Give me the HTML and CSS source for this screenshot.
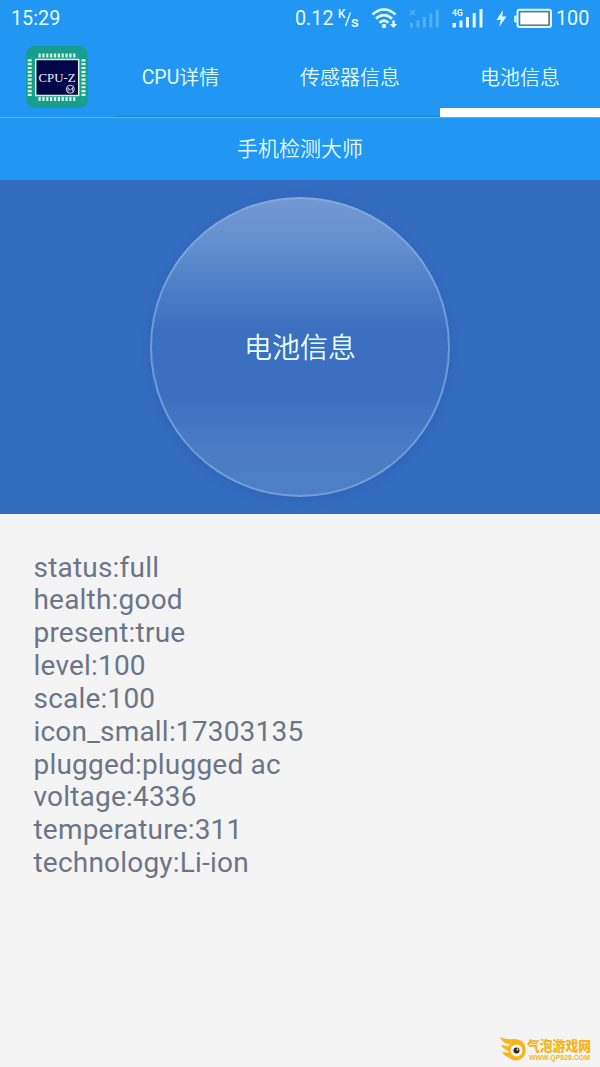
FILE: index.html
```html
<!DOCTYPE html>
<html lang="zh-CN">
<head>
<meta charset="utf-8">
<title>手机检测大师</title>
<link rel="stylesheet" href="styles.css">
</head>
<body>
<div class="screen">
  <div class="status">
    <span class="clock">15:29</span>
    <span class="rate">0.12</span>
    <svg class="status-icons" width="220" height="37" viewBox="337 0 220 37" fill="#e2fbff">
      <text class="unit" x="338" y="18">K</text>
      <path d="M345.500 26 350.500 12.500" stroke="#e2fbff" stroke-width="1.4"/>
      <text class="unit unit-s" x="351" y="27">s</text>
      <g fill="none" stroke="#e2fbff" stroke-width="2.600">
        <path d="M372.500 14.500Q384 4.500 395.500 14.500"/>
        <path d="M376 18.800Q384 11.500 392 18.800"/>
        <path d="M379.500 22.700Q384 18.500 388.500 22.700"/>
      </g>
      <circle cx="384" cy="26" r="2.200"/>
      <path d="M392.300 20.500h2.400v3.500h2.500l-3.700 4-3.700-4h2.500z"/>
      <g opacity=".27">
        <path d="M410 23h3v4.500h-3zM416.500 20.500h3v7h-3zM422.800 17h3v10.500h-3zM429.300 13.500h3v14h-3zM435.800 9.500h3v18h-3z"/>
        <path d="m410 10 5 5m0-5-5 5" stroke="#e2fbff" stroke-width="1.500"/>
      </g>
      <text class="network" x="452" y="15.500">4G</text>
      <path d="M452.500 23h3.500v4.500h-3.500zM459.500 20.500h3v7h-3zM466 17h3v10.500h-3zM472.700 13h3v14.500h-3zM479.500 9h3v18.500h-3z"/>
      <path d="m503 10-6.500 10h4.200l-1.500 7 7.300-10.500h-4.300z"/>
      <path d="M516 16h-1.200v6h1.200z" stroke="#e2fbff"/>
      <rect x="517.500" y="9.700" width="33.500" height="17.400" rx="2" fill="none" stroke="#e2fbff" stroke-width="2"/>
      <rect x="519" y="11.200" width="30.500" height="14.400" fill="#647b88"/>
      <rect x="520.300" y="12.500" width="27.900" height="11.900" fill="#fff"/>
    </svg>
    <span class="charge">100</span>
  </div>
  <nav class="tabs">
    <svg class="logo" width="62" height="62" viewBox="0 0 62 62">
      <rect width="62" height="62" rx="9" fill="#189e8e"/>
      <g stroke="#d8fadb" stroke-width="4">
        <path d="M12.500 9.500h37" stroke-dasharray="2.200 1.650"/>
        <path d="M12.500 53h37" stroke-dasharray="2.200 1.650"/>
        <path d="M3.700 13.200v37" stroke-dasharray="2.200 1.650"/>
        <path d="M57.500 13.200v37" stroke-dasharray="2.200 1.650"/>
      </g>
      <rect x="9.700" y="13.500" width="43" height="36" fill="#02074a" stroke="#e1eddc" stroke-width="1.500"/>
      <text class="logo-text" x="12.500" y="35.500" textLength="37" lengthAdjust="spacingAndGlyphs">CPU-Z</text>
      <circle cx="44.300" cy="43.200" r="4" fill="none" stroke="#d9dce8"/>
      <path d="M42 45.500v-4l2.300 3 2.300-3v4" fill="none" stroke="#d9dce8" stroke-width=".9"/>
    </svg>
    <div class="tab tab-cpu"><span class="latin">CPU</span>详情</div>
    <div class="tab tab-sensor">传感器信息</div>
    <div class="tab tab-battery">电池信息</div>
  </nav>
  <div class="divider"></div>
  <h1 class="title">手机检测大师</h1>
  <section class="hero"><div class="orb">电池信息</div></section>
  <main class="details">
    <div>status:full</div>
    <div>health:good</div>
    <div>present:true</div>
    <div>level:100</div>
    <div>scale:100</div>
    <div>icon_small:17303135</div>
    <div>plugged:plugged ac</div>
    <div>voltage:4336</div>
    <div>temperature:311</div>
    <div>technology:Li-ion</div>
  </main>
  <svg class="watermark" width="100" height="32" viewBox="0 0 100 32" fill="#f7b51b">
    <path d="M0 1Q6 4 14 3Q25 3 25.500 13A9.800 9.800 0 0 1 9 21.500Q4 20 2 15.500L8 17L8.500 15Q3 13 1 8.500L8 10.500L10 8.500Q2 7 0 1Z"/>
    <circle cx="16.500" cy="14.500" r="6" fill="#f4f4f4"/>
    <circle cx="16.500" cy="14.500" r="3" fill="#352711"/>
    <circle cx="17.500" cy="13.500" r=".9" fill="#f4f4f4"/>
    <text class="mark-name" x="27" y="15" textLength="64" lengthAdjust="spacingAndGlyphs">气泡游戏网</text>
    <text class="mark-url" x="29" y="23.500" textLength="61" lengthAdjust="spacingAndGlyphs">WWW.QP828.COM</text>
  </svg>
</div>
</body>
</html>
```
FILE: styles.css
```css
* {
  box-sizing: border-box;
}

body {
  margin: 0;
  font-family: Roboto, "Noto Sans CJK SC", sans-serif;
}

.screen {
  position: relative;
  width: 600px;
  height: 1067px;
  overflow: hidden;
  background: #f4f4f4;
}

.status {
  display: flex;
  align-items: center;
  height: 37px;
  padding-left: 11px;
  background: #2196f3;
  color: #e2fbff;
  font-size: 19.8px;
}

.clock {
  width: 284px;
}

.rate {
  width: 42px;
}

.status-icons {
  flex: none;
}

.charge {
  margin-left: -1px;
}

.unit {
  font-size: 12px;
  font-weight: 500;
}

.unit-s {
  font-size: 15px;
}

.network {
  font-size: 8.5px;
  font-weight: 700;
}

.tabs {
  display: flex;
  height: 79px;
  background: #2196f3;
  color: #e2fbff;
  font-size: 20px;
  font-weight: 350;
}

.logo {
  flex: none;
  margin: 9px 12px 0 26px;
}

.logo-text {
  fill: #f2f5fa;
  font-family: "Liberation Serif", serif;
  font-size: 13px;
  font-weight: 400;
}

.tab {
  display: flex;
  align-items: center;
  justify-content: center;
}

.latin {
  padding-top: 1px;
  font-size: 19.5px;
  font-weight: 400;
}

.tab-cpu {
  width: 160px;
  padding-left: 1px;
}

.tab-sensor {
  width: 180px;
}

.tab-battery {
  width: 160px;
  padding-top: 8px;
  border-bottom: 8px solid #fff;
}

.divider {
  height: 2px;
  background:
    linear-gradient(#fff, #fff) 440px 0 / 160px 1px no-repeat,
    linear-gradient(#1783c9, #1783c9) 114px 0 / 326px 1px no-repeat,
    linear-gradient(#2196f3 50%, #4dbcf0 50%);
}

.title {
  display: flex;
  align-items: center;
  justify-content: center;
  height: 62px;
  margin: 0;
  padding-bottom: 4px;
  background: #2196f3;
  color: #e2fbff;
  font-size: 21px;
  font-weight: 350;
}

.hero {
  display: flex;
  justify-content: center;
  height: 334px;
  padding-top: 17px;
  background: #346cbf;
}

.orb {
  display: flex;
  align-items: center;
  justify-content: center;
  width: 300px;
  height: 300px;
  padding-bottom: 2px;
  border: 2px solid rgba(145, 180, 230, 0.6);
  border-radius: 50%;
  background: linear-gradient(#7499d2, #6690cf 14%, #4c7dc6 31%, #3b6fc0 44%, #3b6fc0 66%, #4a7bc4 83%, #4e80c7) border-box;
  box-shadow: 0 2px 10px rgba(25, 65, 145, 0.2);
  color: #e9fdff;
  font-size: 28px;
  font-weight: 350;
}

.details {
  padding: 37.5px 33.5px 0;
  color: #6c7587;
  font-size: 28px;
  font-weight: 400;
  letter-spacing: 0.2px;
  line-height: 32.85px;
}

.watermark {
  position: absolute;
  left: 500px;
  top: 1036px;
}

.mark-name {
  font-family: "Noto Sans CJK SC", sans-serif;
  font-size: 14px;
  font-weight: 900;
}

.mark-url {
  font-family: "Liberation Sans", sans-serif;
  font-size: 6.5px;
  font-weight: 700;
}
```
